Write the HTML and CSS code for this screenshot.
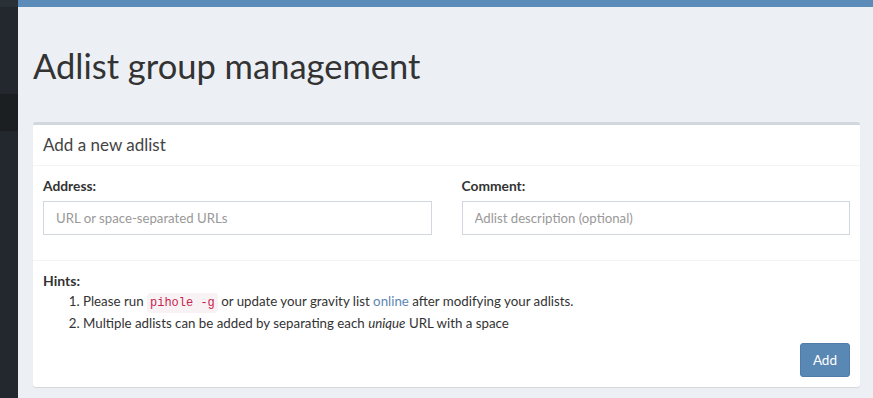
FILE: index.html
```html
<!DOCTYPE html>
<html lang="en">
<head>
<meta charset="utf-8">
<title>Adlist group management</title>
<link rel="stylesheet" href="styles.css">
</head>
<body>
<div class="layout">
  <aside class="sidebar">
    <div class="sidebar-top"></div>
    <div class="sidebar-item"></div>
    <div class="sidebar-item active"></div>
    <div class="sidebar-item rest"></div>
  </aside>
  <div class="main">
    <div class="topbar"></div>
    <div class="content">
      <h1 class="page-title">Adlist group management</h1>
      <section class="card">
        <div class="card-header">
          <h3 class="card-title">Add a new adlist</h3>
        </div>
        <div class="card-body">
          <div class="form-row">
            <div class="form-group">
              <label class="form-label" for="new_address">Address:</label>
              <input id="new_address" class="form-input" type="text" placeholder="URL or space-separated URLs">
            </div>
            <div class="form-group">
              <label class="form-label" for="new_comment">Comment:</label>
              <input id="new_comment" class="form-input" type="text" placeholder="Adlist description (optional)">
            </div>
          </div>
        </div>
        <div class="card-footer">
          <strong class="hints-title">Hints:</strong>
          <ol class="hints">
            <li>Please run <code class="code">pihole -g</code> or update your gravity list <a class="link" href="#">online</a> after modifying your adlists.</li>
            <li>Multiple adlists can be added by separating each <i>unique</i> URL with a space</li>
          </ol>
          <div class="actions">
            <button class="btn-add" type="button">Add</button>
          </div>
        </div>
      </section>
    </div>
  </div>
</div>
</body>
</html>
```

FILE: styles.css
```css
* { box-sizing: border-box; }

html, body {
  margin: 0;
  padding: 0;
  height: 100%;
}

body {
  font-family: Lato, "Open Sans", sans-serif;
  font-size: 13.3px;
  line-height: 20px;
  color: #333;
  background: #ecf0f5;
  overflow: hidden;
}

.layout {
  display: flex;
  min-height: 100%;
}

.sidebar {
  width: 18px;
  flex: none;
  background: #22282d;
  display: flex;
  flex-direction: column;
}

.sidebar-top { height: 7px; background: #2a3136; }
.sidebar-item { height: 87px; }
.sidebar-item.active { height: 37px; background: #1b1f22; }
.sidebar-item.rest { flex: 1; }

.main {
  flex: 1;
  min-width: 0;
  display: flex;
  flex-direction: column;
}

.topbar {
  height: 7px;
  background: #5b8cb9;
}

.content {
  padding: 0 13px 0 15px;
}

.page-title {
  margin: 0;
  padding: 39px 0 0;
  height: 115px;
  font-size: 34.5px;
  line-height: 40px;
  font-weight: 400;
  color: #333;
}

.card {
  background: #fff;
  border-top: 3px solid #d2d6de;
  border-radius: 3px;
  box-shadow: 0 1px 1px rgba(0, 0, 0, 0.1);
}

.card-header {
  padding: 10px;
  border-bottom: 1px solid #f4f4f4;
}

.card-title {
  margin: 0;
  font-size: 17px;
  line-height: 20px;
  font-weight: 400;
  color: #444;
}

.card-body {
  padding: 10px;
}

.form-row {
  display: grid;
  grid-template-columns: 1fr 1fr;
  column-gap: 30px;
}

.form-group {
  margin-bottom: 15px;
}

.form-label {
  display: block;
  font-size: 13.8px;
  font-weight: 700;
  margin-bottom: 5px;
}

.form-input {
  display: block;
  width: 100%;
  height: 34px;
  padding: 6px 12px;
  font-family: inherit;
  font-size: 13.2px;
  color: #555;
  border: 1px solid #d2d6de;
  border-radius: 0;
  background: #fff;
}

.form-input::placeholder {
  color: #999;
}

.card-footer {
  padding: 10px;
  border-top: 1px solid #f4f4f4;
}

.hints-title {
  display: block;
  font-size: 14px;
  font-weight: 700;
}

.hints {
  margin: 0 0 10px;
  padding-left: 40px;
}

.code {
  font-family: "Liberation Mono", "DejaVu Sans Mono", monospace;
  font-size: 12px;
  padding: 3px 3px;
  color: #c7254e;
  background: #f9f2f4;
  border-radius: 4px;
}

.link {
  color: #5e86b3;
  text-decoration: none;
}

.actions {
  display: flex;
  justify-content: flex-end;
}

.btn-add {
  height: 34px;
  padding: 6px 12px;
  font-family: inherit;
  font-size: 13.5px;
  line-height: 20px;
  color: #fff;
  background: #5a88b5;
  border: 1px solid #4f7ca8;
  border-radius: 3px;
}
```
